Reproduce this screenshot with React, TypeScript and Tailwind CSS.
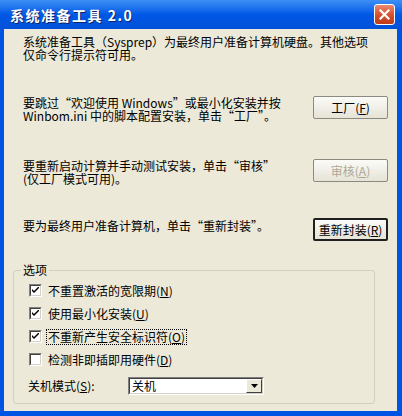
import React from "react";

const font = { fontFamily: '"Noto Sans CJK SC", "Noto Sans", sans-serif' };

function Check({ checked }: { checked: boolean }) {
  return (
    <div className="w-[13px] h-[13px] border border-t-[#808080] border-l-[#808080] border-b-white border-r-white shrink-0">
      <div className="w-full h-full border border-t-[#404040] border-l-[#404040] border-b-[#d4d0c8] border-r-[#d4d0c8] bg-white flex items-center justify-center">
        {checked && (
          <svg width="7" height="7" viewBox="0 0 7 7">
            <path d="M0 2 L0 4 L2 6 L7 1 L7 -1 L2 4 Z" fill="#000" />
          </svg>
        )}
      </div>
    </div>
  );
}

function Btn({ children, disabled, def }: { children: React.ReactNode; disabled?: boolean; def?: boolean }) {
  return (
    <div
      className={
        "w-[75px] h-[23px] shrink-0 flex items-center justify-center text-[12px] rounded-[2px] bg-gradient-to-b from-[#fbfbf8] to-[#e6e3d6] " +
        (def ? "border-2 border-[#202020] " : "border border-[#8a8a80] ") +
        (disabled ? "text-[#aca899]" : "text-black")
      }
    >
      {children}
    </div>
  );
}

function Opt({ checked, label, k, focus }: { checked: boolean; label: string; k: string; focus?: boolean }) {
  return (
    <div className="flex items-center h-[13px] gap-[5px]">
      <Check checked={checked} />
      <span className={"text-[12px] leading-[14px] px-[1px] " + (focus ? "outline outline-1 outline-dotted outline-black" : "")}>
        {label}(<u>{k}</u>)
      </span>
    </div>
  );
}

export default function App() {
  return (
    <div style={font} className="w-[402px] h-[416px] bg-[#0054e3] flex flex-col text-black">
      <div className="h-[29px] shrink-0 flex items-center justify-between pl-[10px] pr-[7px] bg-gradient-to-b from-[#3d8ff5] via-[#0058e6] to-[#0250d8]">
        <span className="text-white font-bold text-[14px] leading-[14px] tracking-[1.5px] [text-shadow:1px_1px_0_#0a246a]">
          系统准备工具 2.0
        </span>
        <div className="w-[21px] h-[21px] rounded-[3px] border border-white bg-gradient-to-b from-[#e98a6c] via-[#d9512f] to-[#c13a17] flex items-center justify-center">
          <svg width="11" height="11" viewBox="0 0 11 11">
            <path d="M1.5 1.5 L9.5 9.5 M9.5 1.5 L1.5 9.5" stroke="#fff" strokeWidth="2.2" strokeLinecap="square" />
          </svg>
        </div>
      </div>
      <div className="mx-[4px] mr-[5px] mb-[5px] flex-1 bg-[#ece9d8] flex flex-col pl-[19px] pr-[9px]">
        <p className="mt-[6px] text-[12px] leading-[13px] w-[350px]">
          系统准备工具（Sysprep）为最终用户准备计算机硬盘。其他选项
          <br />
          仅命令行提示符可用。
        </p>
        <div className="mt-[35px] flex justify-between items-start">
          <p className="text-[12px] leading-[13px]">
            要跳过“欢迎使用 Windows”或最小化安装并按
            <br />
            Winbom.ini 中的脚本配置安装，单击“工厂”。
          </p>
          <Btn>
            工厂(<u>F</u>)
          </Btn>
        </div>
        <div className="mt-[37px] flex justify-between items-start">
          <p className="text-[12px] leading-[13px]">
            要重新启动计算并手动测试安装，单击“审核”
            <br />
            (仅工厂模式可用)。
          </p>
          <Btn disabled>
            审核(<u>A</u>)
          </Btn>
        </div>
        <div className="mt-[33px] flex justify-between items-start">
          <p className="text-[12px] leading-[13px] pt-[1px]">要为最终用户准备计算机，单击“重新封装”。</p>
          <Btn def>
            重新封装(<u>R</u>)
          </Btn>
        </div>
        <fieldset className="mt-[22px] -ml-[10px] w-[362px] h-[141px] border border-[#d0d0bf] rounded-[3px] pl-[15px]">
          <legend className="text-[12px] leading-[14px] px-[2px] -ml-[8px]">选项</legend>
          <div className="flex flex-col gap-[10px] mt-[7px]">
            <Opt checked label="不重置激活的宽限期" k="N" />
            <Opt checked label="使用最小化安装" k="U" />
            <Opt checked label="不重新产生安全标识符" k="O" focus />
            <Opt checked={false} label="检测非即插即用硬件" k="D" />
          </div>
          <div className="flex items-center mt-[11px] -ml-[1px]">
            <span className="text-[12px] leading-[14px] w-[100px]">
              关机模式(<u>S</u>):
            </span>
            <div className="w-[136px] h-[18px] border border-t-[#808080] border-l-[#808080] border-b-white border-r-white">
              <div className="w-full h-full border border-t-[#404040] border-l-[#404040] border-b-[#d4d0c8] border-r-[#d4d0c8] bg-white flex items-center justify-between">
                <span className="text-[12px] leading-[14px] pl-[2px]">关机</span>
                <div className="w-[16px] h-full bg-[#ece9d8] border border-t-white border-l-white border-b-[#404040] border-r-[#404040] flex items-center justify-center">
                  <svg width="7" height="4" viewBox="0 0 7 4">
                    <path d="M0 0 L7 0 L3.5 4 Z" fill="#000" />
                  </svg>
                </div>
              </div>
            </div>
          </div>
        </fieldset>
      </div>
    </div>
  );
}
